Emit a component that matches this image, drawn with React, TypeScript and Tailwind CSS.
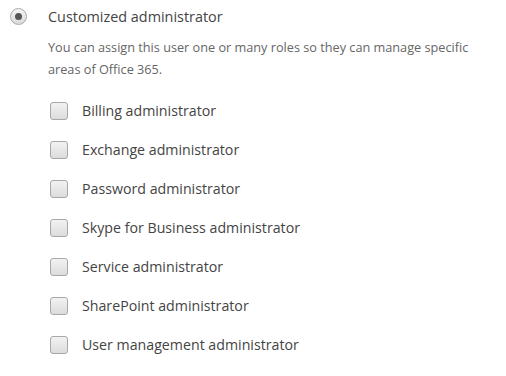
const roles = [
  "Billing administrator",
  "Exchange administrator",
  "Password administrator",
  "Skype for Business administrator",
  "Service administrator",
  "SharePoint administrator",
  "User management administrator",
];

function Checkbox() {
  return (
    <span className="w-[18px] h-[18px] shrink-0 rounded-[3px] border border-[#a8a8a8] bg-gradient-to-b from-[#f2f2f2] to-[#dcdcdc]" />
  );
}

export default function App() {
  return (
    <div className="w-[506px] h-[376px] bg-white font-['Open_Sans',sans-serif] text-[#444]">
      <div className="flex items-center pl-[10px] pt-[7px] h-[26px]">
        <span className="w-[17px] h-[17px] rounded-full border border-[#a8a8a8] bg-gradient-to-b from-[#f4f4f4] to-[#dadada] flex items-center justify-center">
          <span className="w-[7px] h-[7px] rounded-full bg-[#555]" />
        </span>
        <span className="ml-[21px] text-[14.4px]">Customized administrator</span>
      </div>
      <p className="ml-[48px] mt-[10px] mr-[10px] text-[12.7px] leading-[22px] text-[#666]">
        You can assign this user one or many roles so they can manage specific
        <br />
        areas of Office 365.
      </p>
      <ul className="mt-[22px] pl-[50px] flex flex-col gap-[21px]">
        {roles.map((r) => (
          <li key={r} className="flex items-center h-[18px]">
            <Checkbox />
            <span className="ml-[14px] text-[14.2px]">{r}</span>
          </li>
        ))}
      </ul>
    </div>
  );
}
